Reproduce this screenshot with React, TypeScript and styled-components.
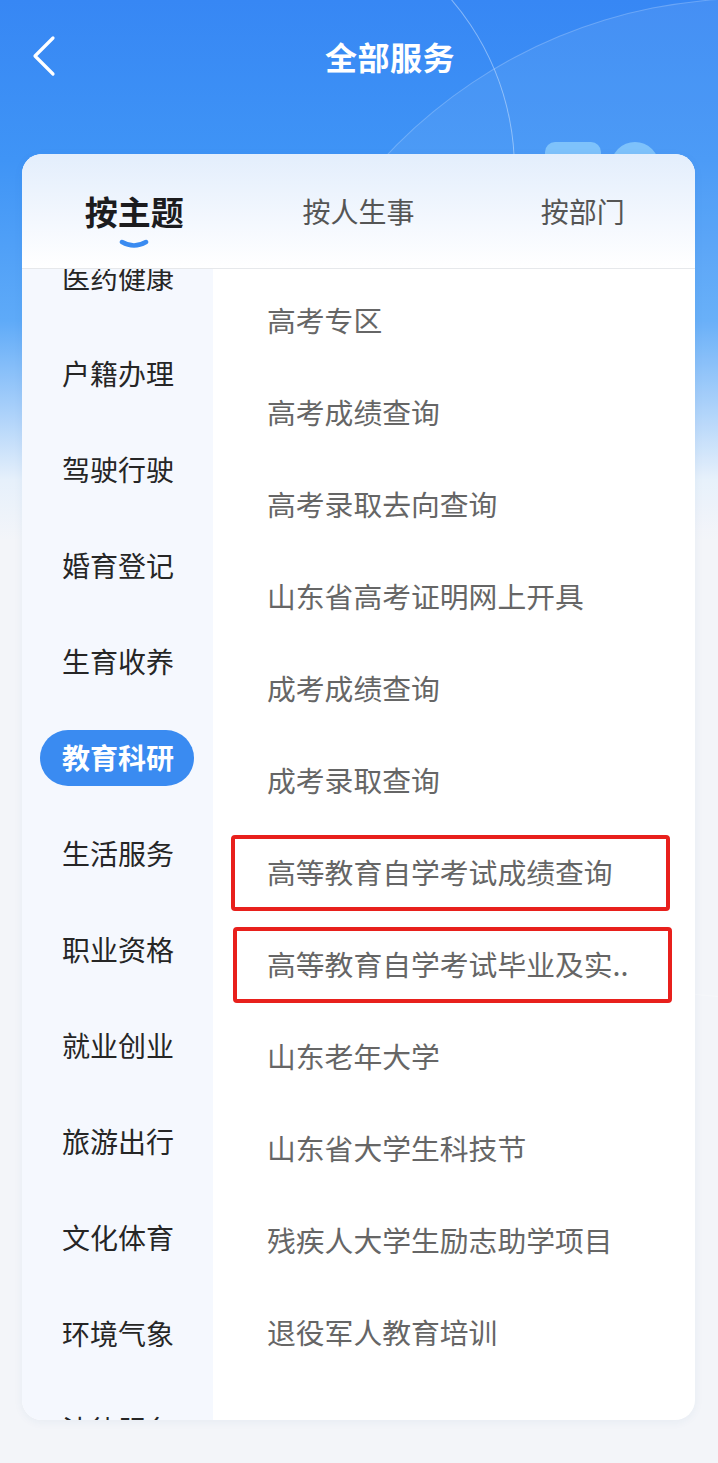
import styled, { createGlobalStyle } from "styled-components";

const GlobalStyle = createGlobalStyle`
  html, body {
    margin: 0;
    padding: 0;
  }
  body {
    font-family: "Noto Sans CJK SC", "Noto Sans", sans-serif;
    background: #f3f5f9;
  }
  * {
    box-sizing: border-box;
  }
`;

const Page = styled.div`
  position: relative;
  width: 718px;
  height: 1463px;
  overflow: hidden;
  background: linear-gradient(
    180deg,
    #3787f4 0px,
    #3f94f6 160px,
    #5eaaf8 320px,
    #a9d0fa 410px,
    #e6f0fb 480px,
    #f3f5f9 540px
  );
`;

/* background decoration behind the card */
const Ring = styled.div`
  position: absolute;
  left: -9px;
  top: -92px;
  width: 524px;
  height: 524px;
  border-radius: 50%;
  border: 1.5px solid transparent;
  border-right-color: rgba(255, 255, 255, 0.4);
`;

const Glow = styled.div`
  position: absolute;
  left: 250px;
  top: -2px;
  width: 1000px;
  height: 1000px;
  border-radius: 50%;
  background: rgba(255, 255, 255, 0.07);
  border: 1px solid rgba(255, 255, 255, 0.2);
`;

const Blob = styled.div<{ $round?: boolean }>`
  position: absolute;
  top: 142px;
  left: ${(p) => (p.$round ? "611px" : "545px")};
  width: ${(p) => (p.$round ? "48px" : "56px")};
  height: 48px;
  border-radius: ${(p) => (p.$round ? "50%" : "10px")};
  background: #7ec2fb;
`;

const NavBar = styled.div`
  position: relative;
  height: 112px;
  display: flex;
  align-items: center;
  padding-left: 31px;
`;

const BackButton = styled.div`
  width: 26px;
  height: 42px;
  display: flex;
  align-items: center;
`;

const Title = styled.h1`
  margin: 0 0 0 268px;
  font-size: 32px;
  font-weight: 700;
  color: #fff;
  letter-spacing: 0.5px;
`;

const Card = styled.div`
  position: relative;
  margin: 42px 23px 0 22px;
  height: 1266px;
  border-radius: 20px;
  background: #fff;
  overflow: hidden;
  display: flex;
  flex-direction: column;
  box-shadow: 0 2px 10px rgba(40, 80, 140, 0.06);
`;

const TabBar = styled.div`
  height: 115px;
  flex-shrink: 0;
  display: grid;
  grid-template-columns: repeat(3, 1fr);
  background: linear-gradient(180deg, #e3eefc 0%, #f4f8fe 60%, #ffffff 100%);
  border-bottom: 1px solid #e6e8eb;
`;

const Tab = styled.div<{ $active?: boolean }>`
  display: flex;
  flex-direction: column;
  align-items: center;
  justify-content: center;
  padding-top: ${(p) => (p.$active ? "14px" : "0")};
  font-size: ${(p) => (p.$active ? "33px" : "28px")};
  font-weight: ${(p) => (p.$active ? 700 : 400)};
  color: ${(p) => (p.$active ? "#1c1c1e" : "#555")};
`;

const Smile = styled.svg`
  margin-top: 4px;
`;

const Body = styled.div`
  flex: 1;
  min-height: 0;
  display: flex;
`;

const Sidebar = styled.div`
  width: 191px;
  flex-shrink: 0;
  background: #f5f8fe;
  overflow: hidden;
  padding-left: 18px;
`;

const SideList = styled.div`
  display: flex;
  flex-direction: column;
  align-items: flex-start;
  gap: 40px;
  margin-top: -19px;
`;

const SideItem = styled.div<{ $active?: boolean }>`
  height: 56px;
  flex-shrink: 0;
  display: flex;
  align-items: center;
  padding: 0 20px 2px 22px;
  border-radius: 28px;
  font-size: 28px;
  white-space: nowrap;
  font-weight: ${(p) => (p.$active ? 700 : 400)};
  color: ${(p) => (p.$active ? "#fff" : "#262626")};
  background: ${(p) => (p.$active ? "#3a8bf1" : "transparent")};
`;

const Content = styled.div`
  flex: 1;
  overflow: hidden;
  padding-top: 14px;
  display: flex;
  flex-direction: column;
  gap: 16px;
`;

const ServiceItem = styled.div<{ $marked?: boolean; $shift?: number }>`
  height: 76px;
  flex-shrink: 0;
  display: flex;
  align-items: center;
  margin: 0 ${(p) => 25 - (p.$shift ?? 0)}px 0 ${(p) => 18 + (p.$shift ?? 0)}px;
  padding: 0 0 3px ${(p) => 32 - (p.$shift ?? 0)}px;
  border: 4px solid ${(p) => (p.$marked ? "#e8201c" : "transparent")};
  border-radius: 4px;
  font-size: 28.8px;
  color: #666;
  white-space: nowrap;
`;

const sideItems = [
  "医药健康",
  "户籍办理",
  "驾驶行驶",
  "婚育登记",
  "生育收养",
  "教育科研",
  "生活服务",
  "职业资格",
  "就业创业",
  "旅游出行",
  "文化体育",
  "环境气象",
  "法律服务",
];

const services = [
  { name: "高考专区" },
  { name: "高考成绩查询" },
  { name: "高考录取去向查询" },
  { name: "山东省高考证明网上开具" },
  { name: "成考成绩查询" },
  { name: "成考录取查询" },
  { name: "高等教育自学考试成绩查询", marked: true },
  { name: "高等教育自学考试毕业及实..", marked: true, shift: 2 },
  { name: "山东老年大学" },
  { name: "山东省大学生科技节" },
  { name: "残疾人大学生励志助学项目" },
  { name: "退役军人教育培训" },
];

const App = () => {
  return (
    <>
      <GlobalStyle />
      <Page>
        <Glow />
        <Ring />
        <Blob />
        <Blob $round />
        <NavBar>
          <BackButton>
            <svg width="26" height="42" viewBox="0 0 26 42" fill="none">
              <path
                d="M22 3 L4 21 L22 39"
                stroke="#fff"
                strokeWidth="3.2"
                strokeLinecap="round"
                strokeLinejoin="round"
              />
            </svg>
          </BackButton>
          <Title>全部服务</Title>
        </NavBar>
        <Card>
          <TabBar>
            <Tab $active>
              按主题
              <Smile width="30" height="10" viewBox="0 0 30 10">
                <path
                  d="M3 3 Q15 10 27 3"
                  stroke="#3a8bf1"
                  strokeWidth="4.5"
                  strokeLinecap="round"
                  fill="none"
                />
              </Smile>
            </Tab>
            <Tab>按人生事</Tab>
            <Tab>按部门</Tab>
          </TabBar>
          <Body>
            <Sidebar>
              <SideList>
                {sideItems.map((s) => (
                  <SideItem key={s} $active={s === "教育科研"}>
                    {s}
                  </SideItem>
                ))}
              </SideList>
            </Sidebar>
            <Content>
              {services.map((s) => (
                <ServiceItem key={s.name} $marked={s.marked} $shift={s.shift}>
                  {s.name}
                </ServiceItem>
              ))}
            </Content>
          </Body>
        </Card>
      </Page>
    </>
  );
};

export default App;
